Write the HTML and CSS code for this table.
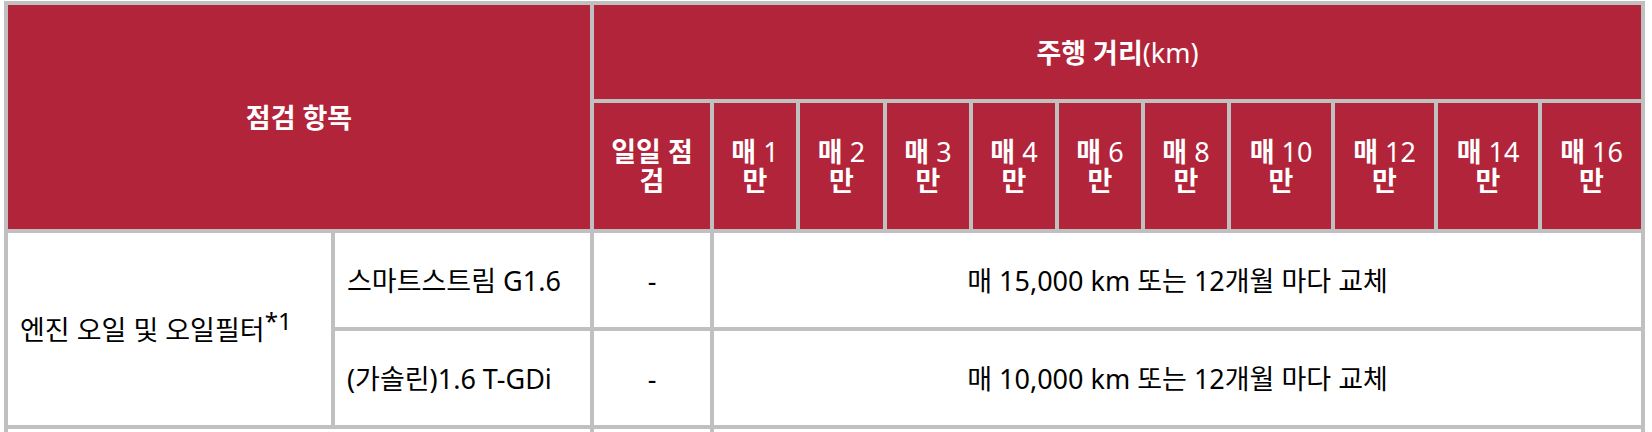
FILE: index.html
```html
<!DOCTYPE html>
<html lang="ko">
<head>
<meta charset="utf-8">
<title>점검 항목</title>
<link rel="stylesheet" href="styles.css">
</head>
<body>
<div class="wrap">
  <table class="maint">
    <colgroup>
      <col class="c-a"><col class="c-b"><col class="c-day">
      <col class="c-s"><col class="c-s2"><col class="c-s"><col class="c-s"><col class="c-s"><col class="c-s">
      <col class="c-l"><col class="c-l2"><col class="c-l"><col class="c-l2">
    </colgroup>
    <thead>
      <tr class="r1">
        <th colspan="2" rowspan="2">점검 항목</th>
        <th colspan="11">주행 거리<span class="lat">(km)</span></th>
      </tr>
      <tr class="r2">
        <th>일일 점검</th>
        <th>매 <span class="lat">1</span> 만</th>
        <th>매 <span class="lat">2</span> 만</th>
        <th>매 <span class="lat">3</span> 만</th>
        <th>매 <span class="lat">4</span> 만</th>
        <th>매 <span class="lat">6</span> 만</th>
        <th>매 <span class="lat">8</span> 만</th>
        <th>매 <span class="lat">10</span> 만</th>
        <th>매 <span class="lat">12</span> 만</th>
        <th>매 <span class="lat">14</span> 만</th>
        <th>매 <span class="lat">16</span> 만</th>
      </tr>
    </thead>
    <tbody>
      <tr class="rb">
        <td rowspan="2" class="left">엔진 오일 및 오일필터<sup>*1</sup></td>
        <td class="left">스마트스트림 G1.6</td>
        <td>-</td>
        <td colspan="10">매 15,000 km 또는 12개월 마다 교체</td>
      </tr>
      <tr class="rb">
        <td class="left">(가솔린)1.6 T-GDi</td>
        <td>-</td>
        <td colspan="10">매 10,000 km 또는 12개월 마다 교체</td>
      </tr>
      <tr class="rb">
        <td colspan="2" class="left"></td>
        <td></td>
        <td colspan="10"></td>
      </tr>
    </tbody>
  </table>
</div>
</body>
</html>
```

FILE: styles.css
```css
html, body {
  margin: 0;
  padding: 0;
  background: #ffffff;
}

body {
  font-family: "Noto Sans", "Noto Sans CJK KR", sans-serif;
  color: #000000;
}

.wrap {
  padding: 1px 7px 0 4px;
}

.maint {
  border-collapse: separate;
  border-spacing: 0;
  table-layout: fixed;
  width: 1641px;
  border: 2px solid #c0c0c0;
}

.c-a { width: 327px; }
.c-b { width: 259px; }
.c-day { width: 120px; }
.c-s { width: 86px; }
.c-s2 { width: 87px; }
.c-l { width: 104px; }
.c-l2 { width: 103px; }

.maint th,
.maint td {
  border: 2px solid #c0c0c0;
  padding: 0 12px;
  font-size: 27px;
  line-height: 29px;
  text-align: center;
  vertical-align: middle;
}

.maint th {
  background: #b2243a;
  color: #ffffff;
  font-weight: 700;
}

.maint th .lat {
  font-weight: 400;
}

.r1 th { height: 94px; }
.r2 th { height: 126px; }
.rb td { height: 94px; }

.maint td.left {
  text-align: left;
}

.maint sup {
  font-size: 0.9em;
  line-height: 0;
  vertical-align: 0.4em;
}
```
